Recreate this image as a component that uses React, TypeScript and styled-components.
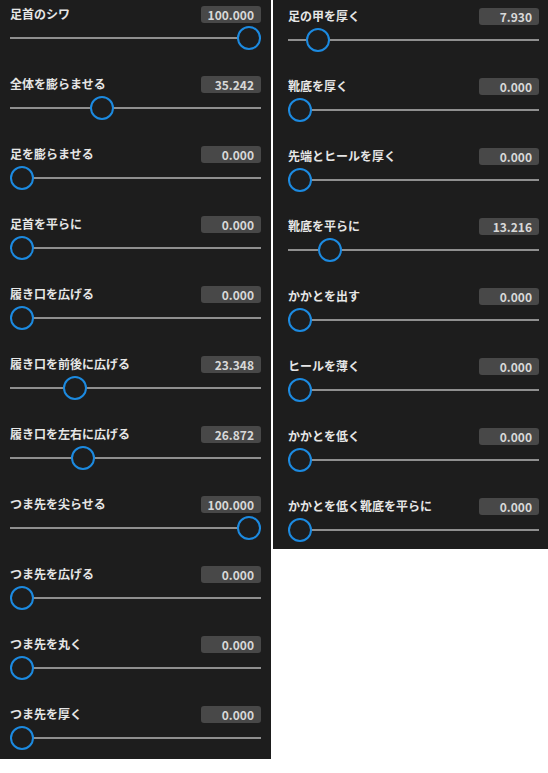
import { useState } from "react";
import styled, { createGlobalStyle } from "styled-components";

const GlobalStyle = createGlobalStyle`
  html, body {
    margin: 0;
    padding: 0;
    background: #ffffff;
  }
  * {
    box-sizing: border-box;
  }
`;

type Item = { label: string; value: number };

const leftItems: Item[] = [
  { label: "足首のシワ", value: 100 },
  { label: "全体を膨らませる", value: 35.242 },
  { label: "足を膨らませる", value: 0 },
  { label: "足首を平らに", value: 0 },
  { label: "履き口を広げる", value: 0 },
  { label: "履き口を前後に広げる", value: 23.348 },
  { label: "履き口を左右に広げる", value: 26.872 },
  { label: "つま先を尖らせる", value: 100 },
  { label: "つま先を広げる", value: 0 },
  { label: "つま先を丸く", value: 0 },
  { label: "つま先を厚く", value: 0 },
];

const rightItems: Item[] = [
  { label: "足の甲を厚く", value: 7.93 },
  { label: "靴底を厚く", value: 0 },
  { label: "先端とヒールを厚く", value: 0 },
  { label: "靴底を平らに", value: 13.216 },
  { label: "かかとを出す", value: 0 },
  { label: "ヒールを薄く", value: 0 },
  { label: "かかとを低く", value: 0 },
  { label: "かかとを低く靴底を平らに", value: 0 },
];

const SliderRow = ({ label, value }: Item) => {
  const [val, setVal] = useState(value);
  return (
    <Row>
      <Header>
        <Label>{label}</Label>
        <Value>{val.toFixed(3)}</Value>
      </Header>
      <Range
        type="range"
        min={0}
        max={100}
        step={0.001}
        value={val}
        onChange={(e) => setVal(parseFloat(e.target.value))}
      />
    </Row>
  );
};

export default function App() {
  return (
    <>
      <GlobalStyle />
      <Page>
        <Panel $width={271} $pad="0 10px 9px 10px">
          {leftItems.map((it) => (
            <SliderRow key={it.label} {...it} />
          ))}
        </Panel>
        <Panel $width={275} $pad="2px 9px 7px 15px">
          {rightItems.map((it) => (
            <SliderRow key={it.label} {...it} />
          ))}
        </Panel>
      </Page>
    </>
  );
}

const Page = styled.div`
  display: flex;
  align-items: flex-start;
  gap: 2px;
  width: 548px;
`;

const Panel = styled.div<{ $width: number; $pad: string }>`
  display: flex;
  flex-direction: column;
  gap: 20px;
  width: ${(p) => p.$width}px;
  flex-shrink: 0;
  padding: ${(p) => p.$pad};
  background: #1d1d1d;
`;

const Row = styled.div`
  display: flex;
  flex-direction: column;
  gap: 3px;
  padding-top: 6px;
`;

const Header = styled.div`
  display: flex;
  align-items: flex-start;
  justify-content: space-between;
  height: 17px;
`;

const Label = styled.span`
  font-family: "Noto Sans CJK JP", "Noto Sans", sans-serif;
  font-weight: 700;
  font-size: 12px;
  line-height: 16px;
  color: #e6e6e6;
`;

const Value = styled.span`
  width: 60px;
  height: 17px;
  padding-right: 7px;
  border-radius: 3px;
  background: #484848;
  text-align: right;
  font-family: "Noto Sans CJK JP", "Noto Sans", sans-serif;
  font-weight: 700;
  font-size: 12px;
  line-height: 17px;
  color: #d8d8d8;
`;

const Range = styled.input`
  -webkit-appearance: none;
  appearance: none;
  width: 100%;
  height: 24px;
  margin: 0;
  background: transparent;

  &::-webkit-slider-runnable-track {
    height: 2px;
    background: #8f8f8f;
  }

  &::-webkit-slider-thumb {
    -webkit-appearance: none;
    box-sizing: border-box;
    width: 24px;
    height: 24px;
    margin-top: -11px;
    border-radius: 50%;
    border: 2px solid #1c8ae0;
    background: #1d1d1d;
  }

  &:focus {
    outline: none;
  }
`;
